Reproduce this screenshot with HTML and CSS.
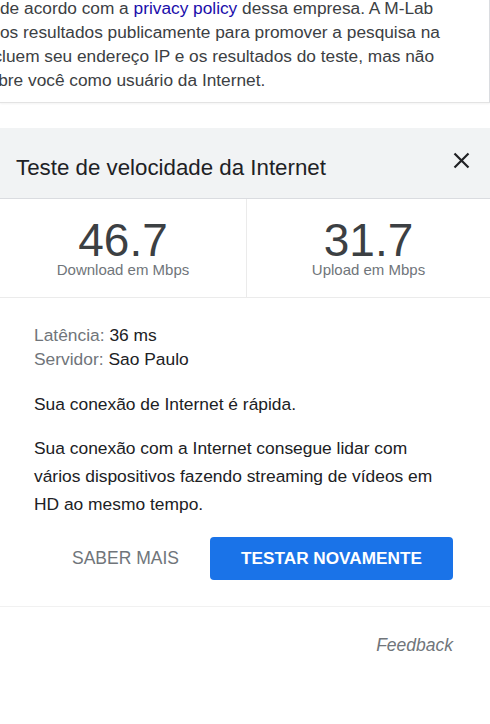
FILE: index.html
```html
<!DOCTYPE html>
<html lang="pt-BR">
<head>
  <meta charset="UTF-8" />
  <meta name="viewport" content="width=device-width, initial-scale=1.0" />
  <title>Teste de velocidade da Internet</title>
  <link rel="stylesheet" href="styles.css">
</head>
<body>
  <section class="notice">
    <div class="line">de acordo com a <a href="#">privacy policy</a> dessa empresa. A M-Lab</div>
    <div class="line">os resultados publicamente para promover a pesquisa na</div>
    <div class="line cut">incluem seu endereço IP e os resultados do teste, mas não</div>
    <div class="line cut">sobre você como usuário da Internet.</div>
  </section>

  <section class="speed">
    <header class="speed-head">
      <h1>Teste de velocidade da Internet</h1>
      <button class="close" aria-label="Fechar">
        <svg width="17" height="17" viewBox="0 0 17 17">
          <path d="M1.5 1.5 L15.5 15.5 M15.5 1.5 L1.5 15.5" stroke="#202124" stroke-width="2.2" fill="none"/>
        </svg>
      </button>
    </header>

    <div class="metrics">
      <div class="metric">
        <div class="value">46.7</div>
        <div class="unit">Download em Mbps</div>
      </div>
      <div class="metric">
        <div class="value">31.7</div>
        <div class="unit">Upload em Mbps</div>
      </div>
    </div>

    <div class="details">
      <div class="facts">
        <div><span class="label">Latência:</span> 36 ms</div>
        <div><span class="label">Servidor:</span> Sao Paulo</div>
      </div>
      <p>Sua conexão de Internet é rápida.</p>
      <p>Sua conexão com a Internet consegue lidar com vários dispositivos fazendo streaming de vídeos em HD ao mesmo tempo.</p>
      <div class="actions">
        <button class="btn-text">SABER MAIS</button>
        <button class="btn-primary">TESTAR NOVAMENTE</button>
      </div>
    </div>

    <footer class="feedback">
      <a href="#">Feedback</a>
    </footer>
  </section>
</body>
</html>
```

FILE: styles.css
```css
body {
  font-family: Arial, 'Liberation Sans', sans-serif;
  background-color: #fff;
  margin: 0;
  padding: 0;
  color: #202124;
  overflow-x: hidden;
}
a {
  text-decoration: none;
}

/* bloco de texto cortado no topo */
.notice {
  margin-top: -4px;
  padding-bottom: 10px;
  border-right: 1px solid #dadce0;
  border-bottom: 1px solid #e3e3e3;
  box-shadow: 0 1px 2px rgba(0,0,0,0.05);
  font-size: 17.3px;
  line-height: 24px;
  color: #3c4043;
}
.notice .line {
  white-space: nowrap;
}
.notice .line.cut {
  margin-left: -20px;
}
.notice a {
  color: #1a0dab;
}

.speed {
  margin-top: 25px;
}
.speed-head {
  background-color: #f1f3f4;
  border-bottom: 1px solid #dadce0;
  height: 70px;
  display: flex;
  align-items: center;
  justify-content: space-between;
  padding: 0 20px 0 16px;
}
.speed-head h1 {
  margin: 9px 0 0;
  font-size: 22.3px;
  font-weight: normal;
  color: #202124;
}
.close {
  background: none;
  border: 0;
  padding: 0;
  width: 17px;
  height: 17px;
  margin-top: -6px;
  cursor: pointer;
}

.metrics {
  display: grid;
  grid-template-columns: 246px 1fr;
  border-bottom: 1px solid #ebebeb;
  height: 98px;
}
.metric {
  text-align: center;
  padding-top: 19px;
}
.metric + .metric {
  border-left: 1px solid #ebebeb;
}
.value {
  font-size: 46px;
  line-height: 44px;
  color: #3c4043;
}
.unit {
  font-size: 15px;
  line-height: 16px;
  color: #70757a;
}

.details {
  padding: 25px 37px 0 34px;
  font-size: 17.4px;
}
.facts {
  line-height: 24px;
}
.label {
  color: #70757a;
}
.details p {
  margin: 16px 0 0;
  line-height: 28px;
}
.facts + p {
  margin-top: 19px;
}

.actions {
  display: flex;
  justify-content: flex-end;
  align-items: center;
  gap: 31px;
  margin-top: 19px;
  padding-bottom: 26px;
  border-bottom: 1px solid #f1f1f1;
  margin-left: -34px;
  margin-right: -37px;
  padding-right: 37px;
}
.actions button {
  font-family: inherit;
  font-size: 17.5px;
  cursor: pointer;
}
.btn-text {
  background: none;
  border: 0;
  color: #70757a;
  padding: 0;
}
.btn-primary {
  background-color: #1a73e8;
  color: #fff;
  border: 0;
  border-radius: 4px;
  width: 243px;
  height: 43px;
  font-weight: bold;
  font-size: 17.2px !important;
}

.feedback {
  text-align: right;
  padding: 28px 37px 0 0;
  font-size: 17.5px;
  line-height: 20px;
}
.feedback a {
  color: #70757a;
  font-style: italic;
}
```
